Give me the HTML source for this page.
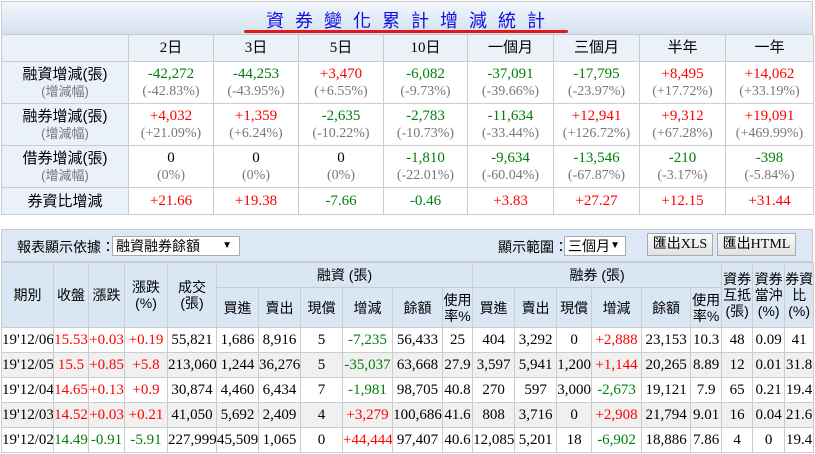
<!DOCTYPE html>
<html><head><meta charset="utf-8"><style>
*{margin:0;padding:0;box-sizing:border-box}
body{width:815px;height:454px;background:#fff;font-family:"Liberation Serif","Noto Sans CJK TC",serif;color:#000;position:relative;overflow:hidden}
table{border-collapse:collapse;table-layout:fixed;position:absolute}
td,th{border:1px solid #ccc;text-align:center;font-weight:normal;overflow:hidden;white-space:nowrap;padding:0}
.r{color:#f00}.g{color:#00800a}.s{color:#777;font-size:14px;line-height:16px}
.cj{font-family:"Liberation Sans","Noto Sans CJK TC",sans-serif}
.cj .s{font-size:13px}
#t1{left:1px;top:34px;width:812px;font-size:15px}
#t1 .hd td{background:#eaf1f8;height:27px}
#t1 td.lb{background:#eaf1fa}
#t1 td{line-height:17px}
#title{position:absolute;left:1px;top:1px;width:812px;height:34px;border:1px solid #ccc;border-bottom:none;background:linear-gradient(#f2f6fb,#d3e1f0)}
#title span{position:absolute;left:264px;top:5px;color:#1010e0;font-size:18px;letter-spacing:11px;font-family:"Liberation Sans","Noto Sans CJK TC",sans-serif}
#title i{position:absolute;left:242px;top:28px;width:324px;height:3px;background:#e01a1a;border-radius:2px}
#bar{position:absolute;left:1px;top:229px;width:812px;height:33px;background:#dce8f5;border:1px solid #ccc;font-family:"Liberation Sans","Noto Sans CJK TC",sans-serif;font-size:14px}
.sel{position:absolute;background:#fff;border:1px solid #aaa;height:20px;top:6px;font-size:14px;line-height:18px;padding-left:3px}
.btn{position:absolute;top:3px;height:23px;border:1px solid #aaa;background:linear-gradient(#fafafa,#e2e2e2);font-size:14px;line-height:21px;text-align:center;font-family:"Liberation Serif","Noto Sans CJK TC",serif}
#t2{left:1px;top:262px;width:812px;font-size:15px}
#t2 .h td{background:#d9e6f4;font-family:"Liberation Sans","Noto Sans CJK TC",sans-serif;font-size:14px;line-height:16px}
#t2 .d td{height:25px}
#t2 tr.z td{background:#f0f0f0}
</style></head><body>
<div id="title"><span>資券變化累計增減統計</span><i></i></div>
<table id="t1">
<colgroup><col style="width:127px"><col style="width:85px"><col style="width:85px"><col style="width:85px"><col style="width:84px"><col style="width:86px"><col style="width:86px"><col style="width:86px"><col style="width:88px"></colgroup>
<tr class="hd"><td class="lb"></td><td>2日</td><td>3日</td><td>5日</td><td>10日</td><td>一個月</td><td>三個月</td><td>半年</td><td>一年</td></tr>
<tr style="height:42px"><td class="lb cj">融資增減(張)<br><span class="s">(增減幅)</span></td><td><span class="g">-42,272</span><br><span class="s">(-42.83%)</span></td><td><span class="g">-44,253</span><br><span class="s">(-43.95%)</span></td><td><span class="r">+3,470</span><br><span class="s">(+6.55%)</span></td><td><span class="g">-6,082</span><br><span class="s">(-9.73%)</span></td><td><span class="g">-37,091</span><br><span class="s">(-39.66%)</span></td><td><span class="g">-17,795</span><br><span class="s">(-23.97%)</span></td><td><span class="r">+8,495</span><br><span class="s">(+17.72%)</span></td><td><span class="r">+14,062</span><br><span class="s">(+33.19%)</span></td></tr>
<tr style="height:42px"><td class="lb cj">融券增減(張)<br><span class="s">(增減幅)</span></td><td><span class="r">+4,032</span><br><span class="s">(+21.09%)</span></td><td><span class="r">+1,359</span><br><span class="s">(+6.24%)</span></td><td><span class="g">-2,635</span><br><span class="s">(-10.22%)</span></td><td><span class="g">-2,783</span><br><span class="s">(-10.73%)</span></td><td><span class="g">-11,634</span><br><span class="s">(-33.44%)</span></td><td><span class="r">+12,941</span><br><span class="s">(+126.72%)</span></td><td><span class="r">+9,312</span><br><span class="s">(+67.28%)</span></td><td><span class="r">+19,091</span><br><span class="s">(+469.99%)</span></td></tr>
<tr style="height:42px"><td class="lb cj">借券增減(張)<br><span class="s">(增減幅)</span></td><td>0<br><span class="s">(0%)</span></td><td>0<br><span class="s">(0%)</span></td><td>0<br><span class="s">(0%)</span></td><td><span class="g">-1,810</span><br><span class="s">(-22.01%)</span></td><td><span class="g">-9,634</span><br><span class="s">(-60.04%)</span></td><td><span class="g">-13,546</span><br><span class="s">(-67.87%)</span></td><td><span class="g">-210</span><br><span class="s">(-3.17%)</span></td><td><span class="g">-398</span><br><span class="s">(-5.84%)</span></td></tr>
<tr style="height:27px"><td class="lb cj">券資比增減</td><td class="r">+21.66</td><td class="r">+19.38</td><td class="g">-7.66</td><td class="g">-0.46</td><td class="r">+3.83</td><td class="r">+27.27</td><td class="r">+12.15</td><td class="r">+31.44</td></tr>
</table>
<div id="bar">
<span style="position:absolute;left:15px;top:7px">報表顯示依據：</span>
<div class="sel" style="left:110px;width:128px">融資融券餘額<span style="position:absolute;right:7px;font-size:10px">▼</span></div>
<span style="position:absolute;left:496px;top:7px">顯示範圍：</span>
<div class="sel" style="left:562px;width:62px">三個月<span style="position:absolute;right:5px;font-size:10px">▼</span></div>
<div class="btn" style="left:645px;width:66px">匯出XLS</div>
<div class="btn" style="left:715px;width:79px">匯出HTML</div>
</div>
<table id="t2">
<colgroup><col style="width:52px"><col style="width:35px"><col style="width:36px"><col style="width:43px"><col style="width:49px"><col style="width:42px"><col style="width:42px"><col style="width:42px"><col style="width:50px"><col style="width:50px"><col style="width:30px"><col style="width:42px"><col style="width:42px"><col style="width:35px"><col style="width:50px"><col style="width:49px"><col style="width:31px"><col style="width:31px"><col style="width:32px"><col style="width:29px"></colgroup>
<tr class="h" style="height:25px"><td rowspan="2">期別</td><td rowspan="2">收盤</td><td rowspan="2">漲跌</td><td rowspan="2">漲跌<br>(%)</td><td rowspan="2">成交<br>(張)</td><td colspan="6">融資 (張)</td><td colspan="6">融券 (張)</td><td rowspan="2">資券<br>互抵<br>(張)</td><td rowspan="2">資券<br>當沖<br>(%)</td><td rowspan="2">券資<br>比<br>(%)</td></tr>
<tr class="h" style="height:40px"><td>買進</td><td>賣出</td><td>現償</td><td>增減</td><td>餘額</td><td>使用<br>率%</td><td>買進</td><td>賣出</td><td>現償</td><td>增減</td><td>餘額</td><td>使用<br>率%</td></tr>
<tr class="d"><td>19'12/06</td><td class="r">15.53</td><td class="r">+0.03</td><td class="r">+0.19</td><td>55,821</td><td>1,686</td><td>8,916</td><td>5</td><td class="g">-7,235</td><td>56,433</td><td>25</td><td>404</td><td>3,292</td><td>0</td><td class="r">+2,888</td><td>23,153</td><td>10.3</td><td>48</td><td>0.09</td><td>41</td></tr>
<tr class="d z"><td>19'12/05</td><td class="r">15.5</td><td class="r">+0.85</td><td class="r">+5.8</td><td>213,060</td><td>1,244</td><td>36,276</td><td>5</td><td class="g">-35,037</td><td>63,668</td><td>27.9</td><td>3,597</td><td>5,941</td><td>1,200</td><td class="r">+1,144</td><td>20,265</td><td>8.89</td><td>12</td><td>0.01</td><td>31.8</td></tr>
<tr class="d"><td>19'12/04</td><td class="r">14.65</td><td class="r">+0.13</td><td class="r">+0.9</td><td>30,874</td><td>4,460</td><td>6,434</td><td>7</td><td class="g">-1,981</td><td>98,705</td><td>40.8</td><td>270</td><td>597</td><td>3,000</td><td class="g">-2,673</td><td>19,121</td><td>7.9</td><td>65</td><td>0.21</td><td>19.4</td></tr>
<tr class="d z"><td>19'12/03</td><td class="r">14.52</td><td class="r">+0.03</td><td class="r">+0.21</td><td>41,050</td><td>5,692</td><td>2,409</td><td>4</td><td class="r">+3,279</td><td>100,686</td><td>41.6</td><td>808</td><td>3,716</td><td>0</td><td class="r">+2,908</td><td>21,794</td><td>9.01</td><td>16</td><td>0.04</td><td>21.6</td></tr>
<tr class="d"><td>19'12/02</td><td class="g">14.49</td><td class="g">-0.91</td><td class="g">-5.91</td><td>227,999</td><td>45,509</td><td>1,065</td><td>0</td><td class="r">+44,444</td><td>97,407</td><td>40.6</td><td>12,085</td><td>5,201</td><td>18</td><td class="g">-6,902</td><td>18,886</td><td>7.86</td><td>4</td><td>0</td><td>19.4</td></tr>
</table>
</body></html>
